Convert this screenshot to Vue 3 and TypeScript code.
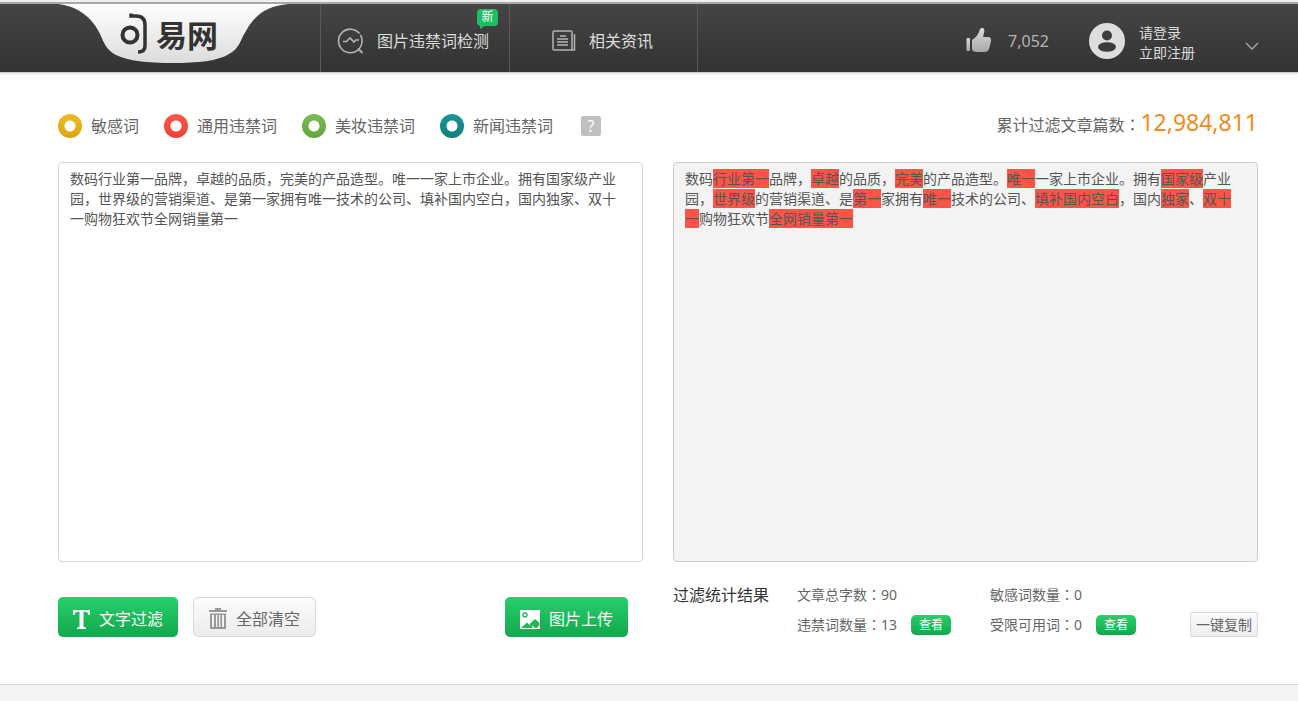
<script setup lang="ts">
import { ref } from 'vue'

interface Segment {
  text: string
  hit: boolean
}

const categories = [
  { name: '敏感词', tone: 'yellow' },
  { name: '通用违禁词', tone: 'red' },
  { name: '美妆违禁词', tone: 'green' },
  { name: '新闻违禁词', tone: 'teal' },
]

// Square brackets mark the forbidden words.
const marked =
  '数码[行业第一]品牌，[卓越]的品质，[完美]的产品造型。[唯一]一家上市企业。拥有[国家级]产业园，[世界级]的营销渠道、是[第一]家拥有[唯一]技术的公司、[填补国内空白]，国内[独家]、[双十一]购物狂欢节[全网销量第一]'

const segments: Segment[] = marked
  .split(/[[\]]/)
  .map((text, i) => ({ text, hit: i % 2 === 1 }))
  .filter((s) => s.text.length > 0)

const article = ref(segments.map((s) => s.text).join(''))

const stats = [
  { label: '文章总字数', value: 90, view: false },
  { label: '敏感词数量', value: 0, view: false },
  { label: '违禁词数量', value: 13, view: true },
  { label: '受限可用词', value: 0, view: true },
]
</script>

<template>
  <div class="page">
    <header class="header">
      <a class="logo" href="#" aria-label="句易网">
        <svg width="232" height="60" viewBox="0 0 232 60">
          <defs>
            <linearGradient id="plate" x1="0" y1="0" x2="0" y2="1">
              <stop offset="0" stop-color="#ffffff" />
              <stop offset="1" stop-color="#dcdcdc" />
            </linearGradient>
          </defs>
          <path
            d="M0 0C20 2 34 14 41 28C46 38 47 45 58 51C70 57 90 59 114 59C140 59 160 57 171 50C182 44 182 36 188 27C197 10 210 2 230 0Z"
            fill="url(#plate)"
          />
          <circle cx="72" cy="31" r="7.5" fill="none" stroke="#333" stroke-width="4" />
          <path
            d="M73 9.500V12H78C84 12 87 15 87 21V42C87 46 85 48 80 48"
            fill="none"
            stroke="#333"
            stroke-width="3.500"
          />
          <text class="logo-text" x="98" y="43">易网</text>
        </svg>
      </a>
      <nav class="nav">
        <a class="nav-item detect" href="#">
          <svg class="nav-icon" width="28" height="28" viewBox="0 0 28 28" fill="none" stroke="#b4b4b4" stroke-width="1.600">
            <path d="M22 22A11.800 11.800 0 1 1 22.500 6.500M23.500 8A11.800 11.800 0 0 1 22 22" />
            <path d="M6 14.500H9.500L13 11L17 15L19 13H22" />
            <path d="M21 21.500L25.500 26" stroke-width="2" />
          </svg>
          <span class="nav-label">图片违禁词检测<span class="new">新</span></span>
        </a>
        <a class="nav-item news" href="#">
          <svg class="nav-icon" width="24" height="22" viewBox="0 0 24 22" fill="none" stroke="#b4b4b4" stroke-width="1.500">
            <path d="M2 1H19Q20 1 20 2V20H2Q1 20 1 19V2Q1 1 2 1ZM20 20H22.500V4" />
            <path d="M8 6H14M5 9H16M5 12H16M5 15H16" />
          </svg>
          <span class="nav-label">相关资讯</span>
        </a>
      </nav>
      <div class="account">
        <button class="like" type="button" aria-label="点赞">
          <svg width="26" height="28" viewBox="0 0 26 28">
            <defs>
              <linearGradient id="thumb" x1="0" y1="0" x2="0" y2="1">
                <stop offset="0" stop-color="#dcdcdc" />
                <stop offset="1" stop-color="#a8a8a8" />
              </linearGradient>
            </defs>
            <rect x="0.500" y="11" width="3.500" height="13" rx="1" fill="url(#thumb)" />
            <path
              d="M6 13Q12 9 13.500 3.500Q14.500 0 17 1Q19 2 18 6L17 10H22Q25.500 10 25 14L23 22Q22 25 18 25H11Q7 25 6 22.500Z"
              fill="url(#thumb)"
            />
          </svg>
          <span>7,052</span>
        </button>
        <svg class="avatar" width="36" height="36" viewBox="0 0 36 36">
          <circle cx="18" cy="18" r="18" fill="#dedede" />
          <circle cx="18" cy="12.500" r="5" fill="#3c3c3c" />
          <ellipse cx="18" cy="24" rx="9" ry="4.800" fill="#3c3c3c" />
        </svg>
        <div class="links">
          <a href="#">请登录</a>
          <a href="#">立即注册</a>
        </div>
        <button class="more" type="button" aria-label="展开">
          <svg width="14" height="8" viewBox="0 0 14 8" fill="none" stroke="#aaa" stroke-width="1.300">
            <path d="M1 1L7 7L13 1" />
          </svg>
        </button>
      </div>
    </header>

    <main class="main">
      <div class="legend">
        <ul class="cats">
          <li v-for="c in categories" :key="c.name">
            <i class="ring" :class="c.tone"></i>{{ c.name }}
          </li>
        </ul>
        <button class="help" type="button">?</button>
        <p class="total">累计过滤文章篇数<span class="colon">：</span><strong>12,984,811</strong></p>
      </div>

      <div class="columns">
        <section class="column">
          <textarea v-model="article" class="box" aria-label="文章内容" spellcheck="false"></textarea>
          <div class="actions">
            <button class="btn primary" type="button">
              <svg width="17" height="19" viewBox="0 0 17 19" fill="#fff">
                <path d="M0 0H17V5H15.500Q15 1.800 12 1.800H10.500V16Q10.500 17.500 13 17.500V19H4V17.500Q6.500 17.500 6.500 16V1.800H5Q2 1.800 1.500 5H0Z" />
              </svg>
              文字过滤
            </button>
            <button class="btn plain" type="button">
              <svg width="18" height="22" viewBox="0 0 18 22" fill="#999">
                <path d="M0 2H6V0H12V2H18V4H0Z" />
                <path fill-rule="evenodd" d="M1 5.500H17V21H1ZM3 7V19H5V7ZM7 7V19H8.300V7ZM10 7V19H11.300V7ZM13 7V19H15V7Z" />
              </svg>
              全部清空
            </button>
            <button class="btn primary upload" type="button">
              <svg width="20" height="19" viewBox="0 0 20 19">
                <rect width="20" height="19" rx="1" fill="#fff" />
                <circle cx="5" cy="5" r="2" fill="none" stroke="#1cb95a" stroke-width="1.300" />
                <path d="M1 18L7 12.500L10 15.500L9.500 14L15 9L19.500 13V15L17 18H15L11.500 15L13 18Z" fill="#1cb95a" />
              </svg>
              图片上传
            </button>
          </div>
        </section>

        <section class="column">
          <div class="box result">
            <component :is="s.hit ? 'mark' : 'span'" v-for="(s, i) in segments" :key="i">{{ s.text }}</component>
          </div>
          <div class="summary">
            <h2>过滤统计结果</h2>
            <ul class="stats">
              <li v-for="s in stats" :key="s.label">
                <span>{{ s.label }}<span class="colon">：</span>{{ s.value }}</span>
                <button v-if="s.view" class="view" type="button">查看</button>
              </li>
            </ul>
            <button class="copy" type="button">一键复制</button>
          </div>
        </section>
      </div>
    </main>
    <footer class="footer"></footer>
  </div>
</template>

<style>
body {
  margin: 0;
}
</style>

<style scoped>
.page {
  display: flex;
  flex-direction: column;
  min-height: 100vh;
  background: #fff;
  color: #666;
  font: 14px/20px "Noto Sans", "Noto Sans CJK SC", sans-serif;
}
button,
textarea {
  font: inherit;
  color: inherit;
  box-sizing: border-box;
}
button {
  padding: 0;
  border: 0;
  background: none;
  cursor: pointer;
}
a {
  color: inherit;
  text-decoration: none;
}
svg {
  display: block;
  flex: none;
}
ul,
h2,
p {
  margin: 0;
  padding: 0;
  list-style: none;
}
.colon {
  font-family: "Noto Sans CJK TC", sans-serif;
  line-height: 1;
}
.header {
  display: flex;
  height: 68px;
  padding-right: 39px;
  border-top: 2px solid #a8a8a8;
  border-bottom: 1px solid #ccc;
  margin-top: 2px;
  background: linear-gradient(#454545, #333) padding-box;
  outline: 2px solid #f0f0f0;
}
.logo {
  width: 262px;
  padding-left: 58px;
  flex: none;
}
.logo-text {
  font: 700 31px "Noto Sans CJK SC", sans-serif;
  fill: #333;
}
.nav {
  display: flex;
}
.nav-item {
  display: flex;
  align-items: center;
  box-sizing: border-box;
  border-right: 1px solid #5a5a5a;
  color: #ddd;
  font-size: 16px;
  padding-top: 5px;
}
.detect {
  width: 190px;
  padding-left: 16px;
  gap: 12px;
  border-left: 1px solid #5a5a5a;
}
.news {
  width: 188px;
  padding-left: 42px;
  gap: 13px;
}
.nav-label {
  position: relative;
  white-space: nowrap;
}
.new {
  position: absolute;
  top: -22px;
  right: -9px;
  width: 21px;
  height: 17px;
  border-radius: 4px;
  background: #1ebf62;
  color: #fff;
  font-size: 12px;
  line-height: 16px;
  text-align: center;
}
.new::after {
  content: "";
  position: absolute;
  left: 3px;
  top: 16px;
  border-top: 4px solid #1ebf62;
  border-right: 6px solid transparent;
}
.account {
  display: flex;
  align-items: center;
  margin-left: auto;
  padding-top: 6px;
  color: #ddd;
}
.like {
  display: flex;
  align-items: center;
  gap: 16px;
  color: #b4b4b4;
  font-size: 16px;
}
.avatar {
  margin-left: 40px;
}
.links {
  display: flex;
  flex-direction: column;
  margin: 4px 50px 0 14px;
}
.more {
  padding-top: 10px;
}
.main {
  padding: 33px 40px 47px 58px;
}
.legend {
  display: flex;
  align-items: center;
  height: 40px;
  font-size: 16px;
}
.cats {
  display: flex;
  gap: 25px;
}
.cats li {
  display: flex;
  align-items: center;
  gap: 9px;
}
.ring {
  box-sizing: border-box;
  width: 24px;
  height: 24px;
  border-radius: 50%;
  background: radial-gradient(circle, #fff 5px, transparent 6px), var(--tone);
}
.yellow {
  --tone: linear-gradient(#f0b92c, #dba60c);
}
.red {
  --tone: linear-gradient(#fb584b, #ee4033);
}
.green {
  --tone: linear-gradient(#7dba58, #63a53a);
}
.teal {
  --tone: linear-gradient(#1d9797, #0f7c7e);
}
.help {
  width: 20px;
  height: 20px;
  margin-left: 28px;
  border-radius: 2px;
  background: #c0c0c0;
  color: #fff;
  font-size: 16px;
}
.total {
  margin-left: auto;
  padding-bottom: 6px;
}
.total strong {
  color: #f28a1c;
  font-size: 23px;
  font-weight: 400;
}
.columns {
  display: grid;
  grid-template-columns: 1fr 1fr;
  gap: 30px;
  padding-top: 16px;
}
.box {
  display: block;
  box-sizing: border-box;
  width: 100%;
  height: 400px;
  padding: 6px 20px 6px 11px;
  border: 1px solid #d6d6d6;
  border-radius: 4px;
  background: #fff;
  color: #555;
  resize: none;
  outline: 0;
}
.result {
  border-color: #ccc;
  background: #f3f3f3;
}
.result mark {
  background: #fc5547;
  color: #555;
}
.actions {
  display: flex;
  gap: 15px;
  padding: 35px 15px 0 0;
}
.btn {
  display: flex;
  align-items: center;
  height: 40px;
  border-radius: 5px;
  font-size: 16px;
  padding: 4px 15px 0 15px;
  gap: 9px;
}
.primary {
  background: linear-gradient(#27cf6c, #12a84c);
  color: #fff;
}
.plain {
  border: 1px solid #d9d9d9;
  background: linear-gradient(#fcfcfc, #ececec);
}
.upload {
  margin-left: auto;
}
.summary {
  display: flex;
  align-items: flex-start;
  padding-top: 23px;
}
.summary h2 {
  color: #333;
  font-size: 16px;
  font-weight: 400;
  width: 124px;
  line-height: 20px;
}
.stats {
  display: grid;
  grid-template-columns: 193px auto;
  row-gap: 10px;
}
.stats li {
  display: flex;
  height: 20px;
  gap: 14px;
  white-space: nowrap;
}
.view {
  width: 40px;
  height: 20px;
  border-radius: 5px;
  background: linear-gradient(#27cf6c, #12a84c);
  color: #fff;
  font-size: 12px;
}
.copy {
  width: 68px;
  height: 25px;
  margin: 27px 0 0 auto;
  border: 1px solid #d9d9d9;
  border-radius: 2px;
  background: linear-gradient(#fafafa, #efefef);
}
.footer {
  flex: 1;
  border-top: 1px solid #d9d9d9;
  background: #f3f3f3;
}
</style>
